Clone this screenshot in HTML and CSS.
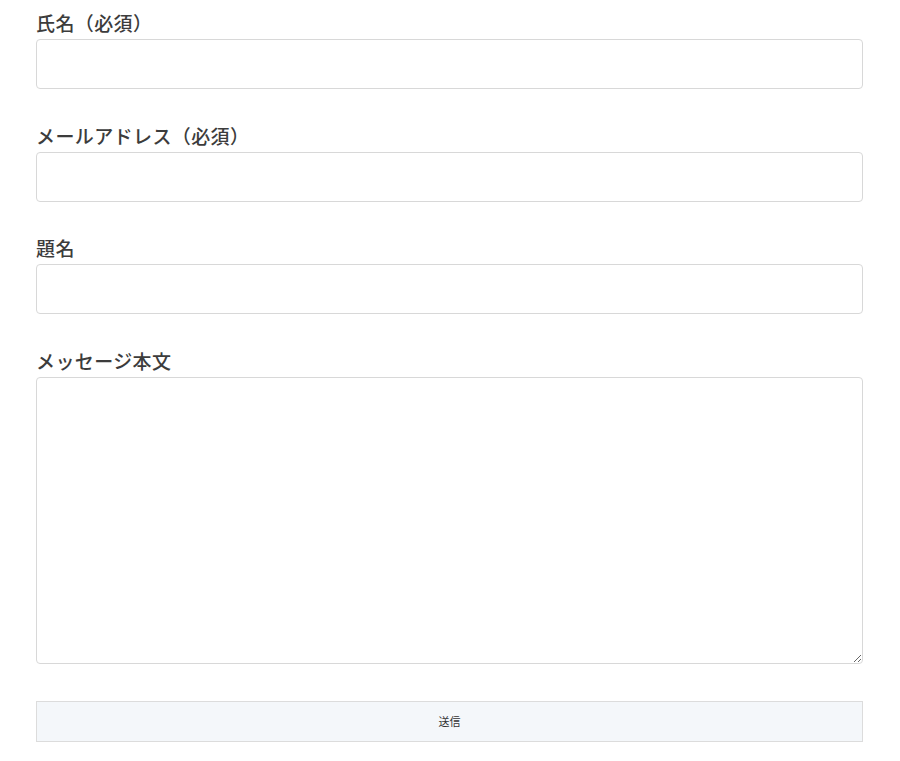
FILE: index.html
```html
<!DOCTYPE html>
<html lang="ja">
<head>
    <meta charset="UTF-8">
    <meta name="viewport" content="width=device-width, initial-scale=1.0">
    <title>お問い合わせ</title>
    <link rel="stylesheet" href="styles.css">
</head>
<body>
    <form class="contact">
        <div class="field">
            <label for="name">氏名（必須）</label>
            <input type="text" id="name">
        </div>
        <div class="field">
            <label for="email">メールアドレス（必須）</label>
            <input type="email" id="email">
        </div>
        <div class="field">
            <label for="subject">題名</label>
            <input type="text" id="subject">
        </div>
        <div class="field">
            <label for="message">メッセージ本文</label>
            <textarea id="message"></textarea>
        </div>
        <button type="submit">送信</button>
    </form>
</body>
</html>
```

FILE: styles.css
```css
body {
    margin: 0;
    background-color: #fff;
    color: #333;
    font-family: "Noto Sans CJK JP", "Noto Sans", sans-serif;
}

.contact {
    width: 827px;
    padding: 10px 0 0 36px;
}

.field {
    display: flex;
    flex-direction: column;
    margin-bottom: 33.5px;
}

.field label {
    font-size: 19px;
    font-weight: 500;
    line-height: 26px;
    letter-spacing: 0.4px;
    margin-bottom: 3px;
    color: #3c3c3c;
    text-spacing-trim: space-all;
}

input, textarea {
    box-sizing: border-box;
    width: 100%;
    height: 50px;
    border: 1px solid #d8d8d8;
    border-radius: 4px;
    background-color: #fff;
    padding: 8px 12px;
    font-size: 15px;
    font-family: inherit;
}

textarea {
    height: 287px;
}

.field:last-of-type {
    margin-bottom: 37px;
}

button {
    box-sizing: border-box;
    display: block;
    width: 100%;
    height: 41px;
    background-color: #f4f7fa;
    border: 1px solid #dcdcdc;
    border-radius: 0;
    color: #333;
    font-size: 11px;
    font-family: inherit;
    cursor: pointer;
}
```
